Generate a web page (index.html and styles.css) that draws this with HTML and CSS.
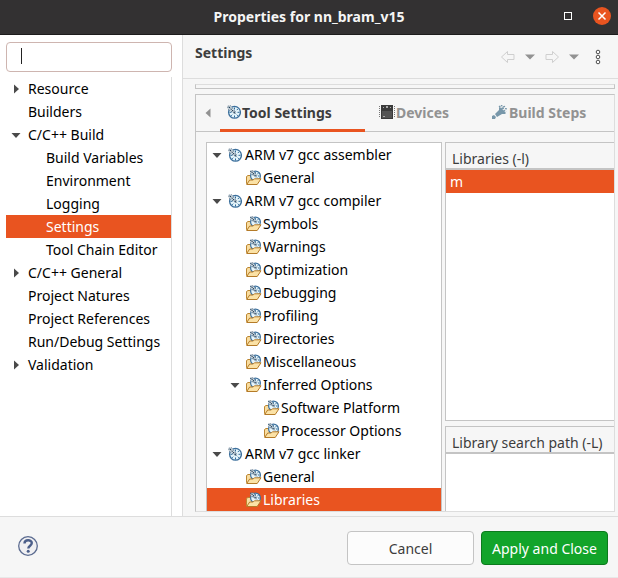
FILE: index.html
```html
<!DOCTYPE html>
<html lang="en">
<head>
<meta charset="utf-8">
<title>Properties for nn_bram_v15</title>
<link rel="stylesheet" href="styles.css">
</head>
<body>
<svg class="defs" aria-hidden="true">
  <symbol id="right" viewBox="0 0 10 10"><path d="M3 0.500v9l5-4.500z" fill="#4a4a4a"/></symbol>
  <symbol id="down" viewBox="0 0 10 10"><path d="M0.500 3h9l-4.500 5z" fill="#4a4a4a"/></symbol>
  <symbol id="gauge" viewBox="0 0 14 14">
    <circle cx="7.500" cy="7.300" r="5.900" fill="#e6f5fb" stroke="#3c6f9c" stroke-width="1.300"/>
    <path d="M7.500 2.500v2M12.500 7.300h-2M7.500 12.500v-2M2.500 7.300h2M11 3.800l-1.200 1.300M11 10.900l-1.200-1.200M4 10.900l1.200-1.200" stroke="#2f6a99" stroke-width="1"/>
    <path d="M.8 1.200l2.800-.4 5.200 6.400-1.300 1.300L1 4z" fill="#e4ecf0" stroke="#34536e" stroke-width=".9" stroke-dasharray="1 1"/>
    <path d="M2 2l6.500 6.500" stroke="#1f3c56" stroke-width="1.200" stroke-dasharray="1.500 .7"/>
  </symbol>
  <symbol id="folder" viewBox="1 0 16 16">
    <path d="M1.500 13.500v-7l1.500-1h3l1 1.500h5v6z" fill="#f9dda0" stroke="#bc8631"/>
    <circle cx="10.500" cy="6" r="4.900" fill="#e6f5fb" stroke="#3c6f9c" stroke-width="1.200"/>
    <path d="M10.500 2.200v1.500M14.500 6H13M13.300 3.200l-1.200 1.200M13 8.500l-1-1" stroke="#2f6a99"/>
    <path d="M5.500 1l2.500-.3 3.800 5-1.300 1.300-5-3.800z" fill="#e4ecf0" stroke="#34536e" stroke-width=".9" stroke-dasharray="1 1"/>
    <path d="M6.500 1.700l4.800 5" stroke="#1f3c56" stroke-width="1.200" stroke-dasharray="1.500 .7"/>
    <path d="M1.700 14.500l3-4.500h3.500l1.200-1.200h6.600l-3.800 5.700z" fill="#fbe2a6" stroke="#b57b28"/>
  </symbol>
</svg>
<div class="window">
  <header class="titlebar">
    <h1>Properties for nn_bram_v15</h1>
    <div class="window-buttons">
      <button type="button" class="maximize" aria-label="Maximize"></button>
      <button type="button" class="close" aria-label="Close"><svg viewBox="0 0 18 18"><path d="M5.500 5.500l7 7M12.500 5.500l-7 7" stroke="#fff" stroke-width="1.500"/></svg></button>
    </div>
  </header>
  <main class="body">
    <nav class="sidebar" aria-label="Categories">
      <input class="filter" type="text" aria-label="Filter">
      <ul class="tree">
        <li><div class="row"><svg class="arrow"><use href="#right"/></svg>Resource</div></li>
        <li><div class="row"><span class="arrow"></span>Builders</div></li>
        <li><div class="row"><svg class="arrow"><use href="#down"/></svg>C/C++ Build</div>
          <ul>
            <li><div class="row"><span class="arrow"></span>Build Variables</div></li>
            <li><div class="row"><span class="arrow"></span>Environment</div></li>
            <li><div class="row"><span class="arrow"></span>Logging</div></li>
            <li><div class="row selected"><span class="arrow"></span>Settings</div></li>
            <li><div class="row"><span class="arrow"></span>Tool Chain Editor</div></li>
          </ul>
        </li>
        <li><div class="row"><svg class="arrow"><use href="#right"/></svg>C/C++ General</div></li>
        <li><div class="row"><span class="arrow"></span>Project Natures</div></li>
        <li><div class="row"><span class="arrow"></span>Project References</div></li>
        <li><div class="row"><span class="arrow"></span>Run/Debug Settings</div></li>
        <li><div class="row"><svg class="arrow"><use href="#right"/></svg>Validation</div></li>
      </ul>
    </nav>
    <section class="page">
      <header class="page-head">
        <h2>Settings</h2>
        <div class="history">
          <button type="button" aria-label="Back"><svg width="16" height="14" viewBox="0 0 16 14"><path d="M1.500 7l6-5.500v3h6.500v5H7.500v3z" fill="none" stroke="#cfcfcf" stroke-linejoin="round"/></svg></button>
          <button type="button" aria-label="Back history"><svg width="10" height="6" viewBox="0 0 10 6"><path d="M0 .5h10L5 5.500z" fill="#929292"/></svg></button>
          <button type="button" aria-label="Forward"><svg width="16" height="14" viewBox="0 0 16 14"><path d="M14.500 7l-6-5.500v3H2v5h6.500v3z" fill="none" stroke="#cfcfcf" stroke-linejoin="round"/></svg></button>
          <button type="button" aria-label="Forward history"><svg width="10" height="6" viewBox="0 0 10 6"><path d="M0 .5h10L5 5.500z" fill="#929292"/></svg></button>
          <button type="button" class="menu" aria-label="Menu"><svg width="6" height="16" viewBox="0 0 6 16"><g fill="#fff" stroke="#4d4d4d"><circle cx="3" cy="3" r="1.800"/><circle cx="3" cy="8" r="1.800"/><circle cx="3" cy="13" r="1.800"/></g></svg></button>
        </div>
      </header>
      <div class="page-content">
        <div class="strip"></div>
        <div class="notebook">
          <div class="tabs" role="tablist">
            <button type="button" class="scroll" aria-label="Previous tabs"><svg width="6" height="10" viewBox="0 0 6 10"><path d="M5.500 .5v9L.5 5z" fill="#929292"/></svg></button>
            <button type="button" class="tab active" role="tab" aria-selected="true"><svg width="14" height="14"><use href="#gauge"/></svg>Tool Settings</button>
            <button type="button" class="tab" role="tab"><svg width="16" height="14" viewBox="0 0 16 14"><path d="M.5 1v12M15.500 1v12" stroke="#777" stroke-dasharray="1 1"/><path d="M2 0h12v14H2z" fill="#3b3b3b"/><path d="M3 6h10v7H3z" fill="#545454"/><path d="M7 1h2v2H7zM4 11h2v1H4zM4 2h1v1H4zM11 2h1v1h-1z" fill="#aaa"/></svg>Devices</button>
            <button type="button" class="tab" role="tab"><svg width="16" height="14" viewBox="0 0 16 14"><path d="M0 11l2-1 1 1 1 1-1 2H0zM3 9l4-4V2l2 1 5 5-1 1h-3l-5 3z" fill="#7897aa"/><path d="M7 1l7 6M9 0l2 2 3-1M10 3l5 1" fill="none" stroke="#7897aa" stroke-width="1.300" stroke-dasharray="2 1"/></svg>Build Steps</button>
          </div>
          <div class="columns">
            <ul class="tree tools">
              <li><div class="row"><svg class="arrow"><use href="#down"/></svg><svg class="tool"><use href="#gauge"/></svg>ARM v7 gcc assembler</div>
                <ul><li><div class="row"><span class="arrow"></span><svg class="folder"><use href="#folder"/></svg>General</div></li></ul>
              </li>
              <li><div class="row"><svg class="arrow"><use href="#down"/></svg><svg class="tool"><use href="#gauge"/></svg>ARM v7 gcc compiler</div>
                <ul>
                  <li><div class="row"><span class="arrow"></span><svg class="folder"><use href="#folder"/></svg>Symbols</div></li>
                  <li><div class="row"><span class="arrow"></span><svg class="folder"><use href="#folder"/></svg>Warnings</div></li>
                  <li><div class="row"><span class="arrow"></span><svg class="folder"><use href="#folder"/></svg>Optimization</div></li>
                  <li><div class="row"><span class="arrow"></span><svg class="folder"><use href="#folder"/></svg>Debugging</div></li>
                  <li><div class="row"><span class="arrow"></span><svg class="folder"><use href="#folder"/></svg>Profiling</div></li>
                  <li><div class="row"><span class="arrow"></span><svg class="folder"><use href="#folder"/></svg>Directories</div></li>
                  <li><div class="row"><span class="arrow"></span><svg class="folder"><use href="#folder"/></svg>Miscellaneous</div></li>
                  <li><div class="row"><svg class="arrow"><use href="#down"/></svg><svg class="folder"><use href="#folder"/></svg>Inferred Options</div>
                    <ul>
                      <li><div class="row"><span class="arrow"></span><svg class="folder"><use href="#folder"/></svg>Software Platform</div></li>
                      <li><div class="row"><span class="arrow"></span><svg class="folder"><use href="#folder"/></svg>Processor Options</div></li>
                    </ul>
                  </li>
                </ul>
              </li>
              <li><div class="row"><svg class="arrow"><use href="#down"/></svg><svg class="tool"><use href="#gauge"/></svg>ARM v7 gcc linker</div>
                <ul>
                  <li><div class="row"><span class="arrow"></span><svg class="folder"><use href="#folder"/></svg>General</div></li>
                  <li><div class="row selected"><span class="arrow"></span><svg class="folder"><use href="#folder"/></svg>Libraries</div></li>
                </ul>
              </li>
            </ul>
            <div class="lists">
              <section class="group libraries"><h3>Libraries (-l)</h3><ul class="values"><li class="selected">m</li></ul></section>
              <section class="group paths"><h3>Library search path (-L)</h3><ul class="values"></ul></section>
            </div>
          </div>
        </div>
      </div>
    </section>
  </main>
  <footer class="footer">
    <button type="button" class="help" aria-label="Help"><svg width="20" height="20" viewBox="0 0 20 20"><circle cx="10" cy="10" r="9.300" fill="#f0f0f2" stroke="#5b6b90" stroke-width="1.300"/><path d="M6.500 7.500c0-4.300 7.300-4.200 7.300-.4 0 2.600-3.500 2.600-3.500 5.400" fill="none" stroke="#4c5f8a" stroke-width="2.400"/><circle cx="10.200" cy="15.300" r="1.500" fill="#4c5f8a"/></svg></button>
    <button type="button" class="action">Cancel</button>
    <button type="button" class="action primary">Apply and Close</button>
  </footer>
</div>
</body>
</html>
```
FILE: styles.css
```css
* { box-sizing: border-box; }

body {
  margin: 0;
  background: #f6f6f6;
  color: #000;
  font: 14px/23px "Noto Sans", "Open Sans", sans-serif;
}

button {
  margin: 0;
  padding: 0;
  border: 0;
  background: none;
  color: inherit;
  font: inherit;
}

svg { display: block; flex: none; }
h1, h2, h3 { margin: 0; font-size: 14px; }
ul { margin: 0; padding: 0; list-style: none; }
.defs { position: absolute; width: 0; height: 0; }

.window {
  display: flex;
  flex-direction: column;
  min-height: 100vh;
  border-bottom: 1px solid #e8e8e8;
}

.titlebar {
  display: grid;
  grid-template-columns: 1fr auto 1fr;
  align-items: center;
  height: 35px;
  padding: 0 7px 2px 7px;
  background: #333132;
  border-bottom: 1px solid #1d1c1c;
  color: #f5f5f5;
}
.titlebar h1 { grid-column: 2; }
.window-buttons {
  display: flex;
  justify-content: flex-end;
  align-items: center;
  gap: 21px;
}
.maximize { width: 8px; height: 8px; border: 1px solid #fff; }
.close { width: 18px; height: 18px; border-radius: 50%; background: #e95420; }

.body { display: flex; flex: 1; }

.sidebar {
  display: flex;
  flex-direction: column;
  gap: 5px;
  width: 183px;
  padding: 7px 10px 0 6px;
  background: #fff;
  border-right: 1px solid #ddd;
}
/* The empty filter shows a steady text cursor. */
.filter {
  width: 100%;
  height: 30px;
  padding: 0 14px;
  border: 1px solid #ceb5b0;
  border-radius: 4px;
  background: #fff linear-gradient(#222, #222) 14px 5px / 1px 16px no-repeat;
  font: inherit;
  outline: none;
}
.sidebar .tree { flex: 1; border-right: 1px solid #ddd; }

.row {
  display: flex;
  align-items: center;
  height: 23px;
  padding-left: 5px;
  white-space: nowrap;
}
.arrow { flex: none; width: 10px; height: 10px; margin-right: 7px; }
.tree ul .row { padding-left: 23px; }
.tree ul ul .row { padding-left: 41px; }
.selected { background: #e95420; color: #fff; }
.tools .arrow { margin-right: 6px; }
.tool { width: 14px; height: 14px; margin-right: 3px; }
.folder { width: 16px; height: 16px; margin-right: 1px; }

.page { display: flex; flex-direction: column; flex: 1; min-width: 0; }
.page-head {
  display: flex;
  justify-content: space-between;
  height: 44px;
  padding: 6px 17px 0 12px;
  border-bottom: 1px solid #ddd;
  color: #3d3d3d;
}
.history { display: flex; align-items: center; gap: 9px; height: 32px; }
.history .menu { margin-left: 7px; }

.page-content {
  display: flex;
  flex-direction: column;
  flex: 1;
  gap: 5px;
  padding: 5px 3px 4px 12px;
}
.strip {
  height: 5px;
  border: 1px solid #c4c4c4;
  border-top-color: #ddd;
}
.notebook {
  display: flex;
  flex-direction: column;
  flex: 1;
  border: 1px solid #c4c4c4;
  border-right-color: #ddd;
  border-bottom-color: #ddd;
}
.tabs {
  display: flex;
  height: 37px;
  border-bottom: 1px solid #c4c4c4;
  color: #929292;
  font-weight: bold;
}
.scroll { display: flex; align-items: center; width: 24px; padding-left: 9px; }
.tab {
  display: flex;
  align-items: center;
  gap: 1px;
  flex: none;
  width: 113px;
  height: 37px;
  padding: 2px 0 2px 14px;
  border-bottom: 3px solid transparent;
  white-space: nowrap;
}
.tab.active {
  width: 145px;
  padding-left: 7px;
  border-bottom-color: #e95420;
  color: #3d3d3d;
}

.columns {
  display: grid;
  grid-template-columns: 236px minmax(0, 1fr);
  gap: 3px;
  flex: 1;
  padding: 10px 0 0 10px;
}
.tools { background: #fff; border: 1px solid #c4c4c4; border-bottom: 0; }
.lists { display: grid; grid-template-rows: 279px 1fr; gap: 5px; }
.group {
  display: flex;
  flex-direction: column;
  border: 1px solid #c4c4c4;
  border-right: 0;
}
.paths { border-bottom: 0; }
.group h3 {
  height: 27px;
  padding: 4px 6px 0;
  border-bottom: 2px solid #c4c4c4;
  color: #3d3d3d;
  font-weight: normal;
  white-space: nowrap;
}
.values { flex: 1; background: #fff; }
.values li { padding-left: 4px; }

.footer {
  display: flex;
  align-items: flex-start;
  gap: 7px;
  height: 61px;
  padding: 14px 10px 0 18px;
  border-top: 1px solid #ddd;
}
.help { margin-right: auto; padding: 5px 0; }
.action {
  width: 127px;
  height: 34px;
  border: 1px solid #c4c4c4;
  border-radius: 4px;
  background: #fcfcfc;
  color: #3d3d3d;
}
.primary { background: #12a42a; border-color: #0c7a1d; color: #fff; }
```
